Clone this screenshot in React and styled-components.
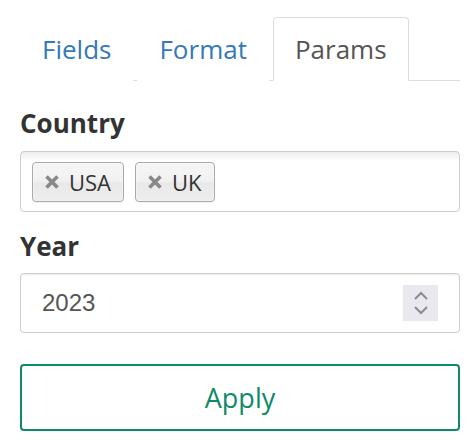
import React, { useState } from "react";
import styled, { createGlobalStyle } from "styled-components";

const Global = createGlobalStyle`
  html, body { margin: 0; padding: 0; background: #fff; }
  body { font-family: "Open Sans", "Noto Sans", sans-serif; color: #333; }
  * { box-sizing: border-box; }
`;

const Page = styled.div`
  padding: 17px 14px 0 20px;
  display: flex;
  flex-direction: column;
`;

const Nav = styled.div`
  display: flex;
  gap: 4px;
  border-bottom: 1px solid #ddd;
  height: 64px;
`;

const Tab = styled.div`
  height: 64px;
  margin-bottom: -1px;
  padding: 0 21px 1px;
  display: flex;
  align-items: center;
  font-size: 26px;
  color: ${(p) => (p.$active ? "#555" : "#337ab7")};
  background: #fff;
  border: 1px solid ${(p) => (p.$active ? "#ddd" : "transparent")};
  border-bottom-color: ${(p) => (p.$active ? "#fff" : "transparent")};
  border-radius: 4px 4px 0 0;
  cursor: pointer;
`;

const Label = styled.div`
  font-size: 26px;
  font-weight: 700;
  line-height: 36px;
  color: #333;
  margin-top: ${(p) => p.$top}px;
  margin-bottom: ${(p) => p.$bottom}px;
`;

const TagBox = styled.div`
  height: 61px;
  border: 1px solid #ccc;
  border-radius: 4px;
  background: linear-gradient(to bottom, #eee 1%, #fff 15%);
  padding: 10px 11px;
  display: flex;
  gap: 11px;
  align-items: flex-start;
`;

const Tag = styled.div`
  height: 40px;
  display: flex;
  align-items: center;
  gap: 10px;
  padding: 0 12px 0 12px;
  border: 1px solid #aaa;
  border-radius: 4px;
  background: linear-gradient(to bottom, #f4f4f4 20%, #f0f0f0 50%, #e8e8e8 52%, #eee 100%);
  box-shadow: inset 0 0 2px #fff, 0 1px 0 rgba(0, 0, 0, 0.05);
  font-size: 22px;
  color: #333;
`;

const NumberBox = styled.div`
  height: 60px;
  border: 1px solid #ccc;
  border-radius: 4px;
  box-shadow: inset 0 1px 1px rgba(0, 0, 0, 0.075);
  display: flex;
  align-items: center;
  justify-content: space-between;
  padding: 0 21px 0 21px;
  font-family: "Liberation Sans", Arial, sans-serif;
  font-size: 24px;
  color: #555;
`;

const Spinner = styled.div`
  width: 35px;
  height: 36px;
  background: #e8e8ee;
  display: flex;
  align-items: center;
  justify-content: center;
`;

const ApplyButton = styled.button`
  margin-top: 31px;
  height: 67px;
  border: 2px solid #0f8a69;
  border-radius: 4px;
  background: #fff;
  color: #0f8a69;
  font-family: "Open Sans", "Noto Sans", sans-serif;
  font-size: 27px;
  padding: 0;
  cursor: pointer;
`;

const XIcon = () => (
  <svg width="14" height="14" viewBox="0 0 14 14">
    <path d="M1.5 1.5 L12.5 12.5 M12.5 1.5 L1.5 12.5" stroke="#888" strokeWidth="3.6" strokeLinecap="butt" />
  </svg>
);

const SpinIcon = () => (
  <svg width="18" height="30" viewBox="0 0 18 30">
    <path d="M3 11 L9 5 L15 11" fill="none" stroke="#8a8a99" strokeWidth="2" />
    <path d="M3 19 L9 25 L15 19" fill="none" stroke="#8a8a99" strokeWidth="2" />
  </svg>
);

export default function App() {
  const [active, setActive] = useState("Params");
  const tabs = ["Fields", "Format", "Params"];
  const countries = ["USA", "UK"];
  return (
    <>
      <Global />
      <Page>
        <Nav>
          {tabs.map((t) => (
            <Tab key={t} $active={active === t} onClick={() => setActive(t)}>
              {t}
            </Tab>
          ))}
        </Nav>
        <Label $top={24} $bottom={10}>Country</Label>
        <TagBox>
          {countries.map((c) => (
            <Tag key={c}>
              <XIcon />
              {c}
            </Tag>
          ))}
        </TagBox>
        <Label $top={16} $bottom={9}>Year</Label>
        <NumberBox>
          <span>2023</span>
          <Spinner>
            <SpinIcon />
          </Spinner>
        </NumberBox>
        <ApplyButton>Apply</ApplyButton>
      </Page>
    </>
  );
}
